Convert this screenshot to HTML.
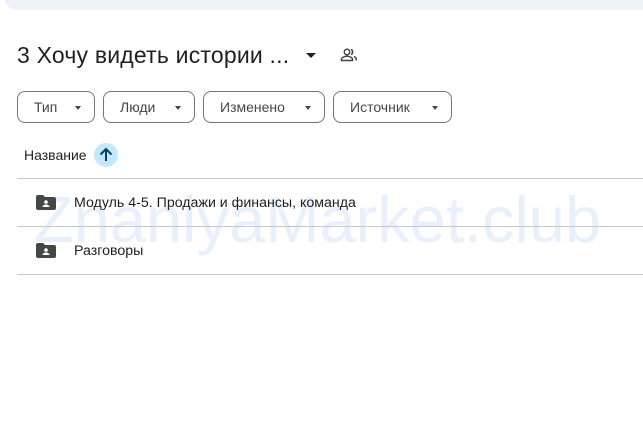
<!DOCTYPE html>
<html><head><meta charset="utf-8"><style>
body{margin:0;width:643px;height:428px;background:#fff;font-family:"Liberation Sans",sans-serif;position:relative;overflow:hidden;color:#1f1f1f}
.top{position:absolute;left:4px;top:-20px;width:660px;height:30px;background:#edf1f8;border-radius:14px}
.title{position:absolute;left:17px;top:42px;font-size:23px;color:#1f1f1f;letter-spacing:0.2px}
.chip{position:absolute;top:91px;height:32px;border:1px solid #747775;border-radius:8px;box-sizing:border-box;font-size:14px;color:#444746;line-height:30px;padding-left:16px}
.chip:after{content:"";position:absolute;right:13px;top:14px;border:3.5px solid transparent;border-top:4px solid #444746;border-bottom:0}
.wm{position:absolute;left:34px;top:182px;font-size:65px;color:#e8f0fc;white-space:nowrap}
.hdr{position:absolute;left:24px;top:147px;font-size:14px}
.sort{position:absolute;left:94px;top:143px;width:24px;height:24px;border-radius:12px;background:#c2e7ff}
.line{position:absolute;left:17px;right:0;height:1px;background:#c7c7c7}
.row{position:absolute;left:74px;font-size:14.2px}
.fold{position:absolute;left:36px;width:20px;height:15px}
</style></head><body>
<div class="top"></div>
<div class="title">3 Хочу видеть истории ...</div>
<div style="position:absolute;left:306px;top:53px;border:5px solid transparent;border-top:5px solid #1f1f1f;border-bottom:0"></div>
<svg style="position:absolute;left:340px;top:47px" width="18" height="16" viewBox="0 0 18 16" fill="none" stroke="#444746" stroke-width="1.5"><circle cx="7" cy="5" r="2.7"/><path d="M1.5 13.5v-1.2c0-1.8 3-3 5.5-3s5.5 1.2 5.5 3v1.2z"/><path d="M11 2.5a2.7 2.7 0 0 1 0 5M14 9.6c1.4.6 2.3 1.5 2.3 2.7v1.2"/></svg>
<div class="chip" style="left:17px;width:78px">Тип</div>
<div class="chip" style="left:103px;width:92px">Люди</div>
<div class="chip" style="left:203px;width:122px">Изменено</div>
<div class="chip" style="left:333px;width:119px">Источник</div>
<div class="wm">ZnaniyaMarket.club</div>
<div class="hdr">Название</div>
<div class="sort"><svg width="24" height="24" viewBox="0 0 24 24"><path d="M12 18V6M6.5 11.5 12 6l5.5 5.5" stroke="#0b3d5e" stroke-width="2" fill="none"/></svg></div>
<div class="line" style="top:178px"></div>
<svg class="fold" style="top:195px" viewBox="0 0 20 15"><path d="M0 2a2 2 0 0 1 2-2h5l2 2h9a2 2 0 0 1 2 2v9a2 2 0 0 1-2 2H2a2 2 0 0 1-2-2z" fill="#444746"/><circle cx="10" cy="7" r="1.8" fill="#fff"/><path d="M6.5 12c0-1.7 2-2.5 3.5-2.5s3.5.8 3.5 2.5z" fill="#fff"/></svg>
<div class="row" style="top:195px">Модуль 4-5. Продажи и финансы, команда</div>
<div class="line" style="top:226px"></div>
<svg class="fold" style="top:243px" viewBox="0 0 20 15"><path d="M0 2a2 2 0 0 1 2-2h5l2 2h9a2 2 0 0 1 2 2v9a2 2 0 0 1-2 2H2a2 2 0 0 1-2-2z" fill="#444746"/><circle cx="10" cy="7" r="1.8" fill="#fff"/><path d="M6.5 12c0-1.7 2-2.5 3.5-2.5s3.5.8 3.5 2.5z" fill="#fff"/></svg>
<div class="row" style="top:243px">Разговоры</div>
<div class="line" style="top:274px"></div>
</body></html>
